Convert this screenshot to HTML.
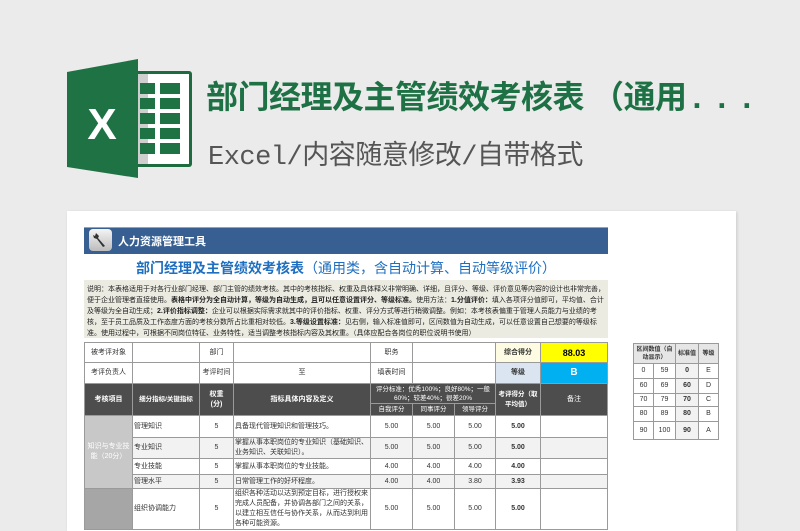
<!DOCTYPE html>
<html><head><meta charset="utf-8">
<style>
*{margin:0;padding:0;box-sizing:border-box}
body{width:800px;height:526px;background:#ebebeb;position:relative;overflow:hidden;font-family:"Liberation Sans","Noto Sans CJK SC",sans-serif}
.a{position:absolute}
.card{left:67px;top:211px;width:669px;height:320px;background:#fff;box-shadow:1px 1px 3px rgba(0,0,0,.15)}
table{border-collapse:collapse;position:absolute;table-layout:fixed}
td{border:1px solid #9a9a9a;font-size:7px;color:#333;text-align:center;vertical-align:middle;padding:0 1px;line-height:10px;overflow:hidden}
.h td.d{background:#4d4d4d;color:#fff;font-weight:bold;font-size:7px}
.l{text-align:left}
.b{font-weight:bold}
</style></head><body>
<svg class="a" style="left:60px;top:55px" width="140" height="130" viewBox="60 55 140 130">
<rect x="134" y="71" width="58" height="96" rx="3" fill="#1d6b3e"/>
<rect x="138" y="74" width="51" height="90" fill="#fff"/>
<rect x="138" y="74" width="10" height="90" fill="#cfcfcf"/>
<g fill="#1f7244">
<rect x="140" y="83" width="15" height="11"/><rect x="160" y="83" width="20" height="11"/>
<rect x="140" y="98" width="15" height="11"/><rect x="160" y="98" width="20" height="11"/>
<rect x="140" y="113" width="15" height="11"/><rect x="160" y="113" width="20" height="11"/>
<rect x="140" y="128" width="15" height="11"/><rect x="160" y="128" width="20" height="11"/>
<rect x="140" y="143" width="15" height="11"/><rect x="160" y="143" width="20" height="11"/>
</g>
<polygon points="67,72 138,59 138,178 67,167" fill="#1f7244"/>
<text x="102" y="139" font-family="Liberation Sans" font-weight="bold" font-size="44" fill="#fff" text-anchor="middle">X</text>
</svg>
<div class="a" style="left:206px;top:72px;font-size:32px;font-weight:bold;color:#1e7145;white-space:nowrap;letter-spacing:-0.5px">部门经理及主管绩效考核表<span style="margin-left:8px">（通用</span><span style="letter-spacing:16px;margin-left:6px">...</span></div>
<div class="a" style="left:208px;top:133px;font-size:27px;color:#555;white-space:nowrap;font-family:'Liberation Mono','Noto Sans CJK SC',monospace;letter-spacing:-0.5px">Excel/内容随意修改/自带格式</div>

<div class="a card"></div>
<div class="a" style="left:84px;top:227px;width:524px;height:27px;background:#375f92;border-top:1px solid #8aa"></div>
<div class="a" style="left:89px;top:229px;width:23px;height:22px;border-radius:4px;background:linear-gradient(#f4f4f4,#bcbcbc)"></div>
<svg class="a" style="left:92px;top:231px" width="17" height="18" viewBox="0 0 17 18"><path d="M4 2 L7 5 L6 7 L13 15 L11 16 L5 8 L2 7 L1 4 L3 5 Z" fill="#333"/></svg>
<div class="a" style="left:118px;top:233px;color:#fff;font-weight:bold;font-size:11px">人力资源管理工具</div>
<div class="a" style="left:84px;top:258px;width:524px;text-align:center;font-size:14px;color:#1f6fc0;white-space:nowrap"><b>部门经理及主管绩效考核表</b>（通用类，含自动计算、自动等级评价）</div>
<div class="a" style="left:84px;top:280px;width:524px;height:58px;background:#ecebe2;font-size:7px;line-height:11px;color:#222;padding:4px 3px;overflow:hidden">说明：本表格适用于对各行业部门经理、部门主管的绩效考核。其中的考核指标、权重及具体释义非常明确、详细，且评分、等级、评价意见等内容的设计也非常完善，便于企业管理者直接使用。<b>表格中评分为全自动计算，等级为自动生成，且可以任意设置评分、等级标准。</b>使用方法：<b>1.分值评价：</b>填入各项评分值即可，平均值、合计及等级为全自动生成；<b>2.评价指标调整：</b>企业可以根据实际需求就其中的评价指标、权重、评分方式等进行稍微调整。例如：本考核表偏重于管理人员能力与业绩的考核，至于员工品质及工作态度方面的考核分数所占比重相对较低。<b>3.等级设置标准：</b>见右侧，输入标准值即可，区间数值为自动生成，可以任意设置自己想要的等级标准。使用过程中，可根据不同岗位特征、业务特性，适当调整考核指标内容及其权重。（具体应配合各岗位的职位说明书使用）</div>

<table style="left:84px;top:342px;width:523px">
<colgroup><col style="width:48px"><col style="width:67px"><col style="width:34px"><col style="width:137px"><col style="width:42px"><col style="width:42px"><col style="width:41px"><col style="width:45px"><col style="width:67px"></colgroup>
<tr style="height:20px"><td>被考评对象</td><td></td><td>部门</td><td></td><td>职务</td><td colspan="2"></td><td class="b" style="background:#fdfbe1">综合得分</td><td class="b" style="background:#ffff00;font-size:9px;color:#000">88.03</td></tr>
<tr style="height:21px"><td>考评负责人</td><td></td><td>考评时间</td><td>至</td><td>填表时间</td><td colspan="2"></td><td class="b" style="background:#dbe5f1">等级</td><td class="b" style="background:#00b0f0;color:#fff;font-size:10px">B</td></tr>
<tr class="h" style="height:20px"><td class="d" rowspan="2">考核项目</td><td class="d" rowspan="2" style="font-size:6.5px">细分指标/关键指标</td><td class="d" rowspan="2">权重<br>(分)</td><td class="d" rowspan="2">指标具体内容及定义</td><td class="d" colspan="3" style="font-weight:normal;font-size:6.5px;line-height:9px">评分标准：优秀100%；良好80%；一般60%；较差40%；很差20%</td><td class="d" rowspan="2" style="font-size:6.5px">考评得分（取平均值）</td><td class="d" rowspan="2" style="font-weight:normal">备注</td></tr>
<tr class="h" style="height:12px"><td class="d" style="font-weight:normal;font-size:6.5px">自我评分</td><td class="d" style="font-weight:normal;font-size:6.5px">同事评分</td><td class="d" style="font-weight:normal;font-size:6.5px">领导评分</td></tr>
<tr style="height:22px"><td rowspan="4" style="background:#c8c8c8;color:#fff">知识与专业技能（20分）</td><td class="l">管理知识</td><td>5</td><td class="l">具备现代管理知识和管理技巧。</td><td>5.00</td><td>5.00</td><td>5.00</td><td class="b">5.00</td><td></td></tr>
<tr style="height:21px;background:#f2f2f2"><td class="l">专业知识</td><td>5</td><td class="l">掌握从事本职岗位的专业知识（基础知识、业务知识、关联知识）。</td><td>5.00</td><td>5.00</td><td>5.00</td><td class="b">5.00</td><td></td></tr>
<tr style="height:16px"><td class="l">专业技能</td><td>5</td><td class="l">掌握从事本职岗位的专业技能。</td><td>4.00</td><td>4.00</td><td>4.00</td><td class="b">4.00</td><td></td></tr>
<tr style="height:14px;background:#f2f2f2"><td class="l">管理水平</td><td>5</td><td class="l">日常管理工作的好坏程度。</td><td>4.00</td><td>4.00</td><td>3.80</td><td class="b">3.93</td><td></td></tr>
<tr style="height:40px"><td style="background:#a6a6a6"></td><td class="l">组织协调能力</td><td>5</td><td class="l">组织各种活动以达到预定目标，进行授权来完成人员配备，并协调各部门之间的关系，以建立相互信任与协作关系，从而达到利用各种可能资源。</td><td>5.00</td><td>5.00</td><td>5.00</td><td class="b">5.00</td><td></td></tr>
</table>

<table style="left:633px;top:343px;width:85px">
<colgroup><col style="width:20px"><col style="width:22px"><col style="width:23px"><col style="width:20px"></colgroup>
<tr style="height:20px;background:#e6e6e6"><td colspan="2" class="b" style="font-size:6px;line-height:8px">区间数值（自动显示）</td><td class="b" style="font-size:6px">标准值</td><td class="b" style="font-size:6px">等级</td></tr>
<tr style="height:15px"><td>0</td><td>59</td><td class="b" style="background:#f2f2f2">0</td><td>E</td></tr>
<tr style="height:15px"><td>60</td><td>69</td><td class="b" style="background:#f2f2f2">60</td><td>D</td></tr>
<tr style="height:13px"><td>70</td><td>79</td><td class="b" style="background:#f2f2f2">70</td><td>C</td></tr>
<tr style="height:15px"><td>80</td><td>89</td><td class="b" style="background:#f2f2f2">80</td><td>B</td></tr>
<tr style="height:18px"><td>90</td><td>100</td><td class="b" style="background:#f2f2f2">90</td><td>A</td></tr>
</table>
</body></html>
